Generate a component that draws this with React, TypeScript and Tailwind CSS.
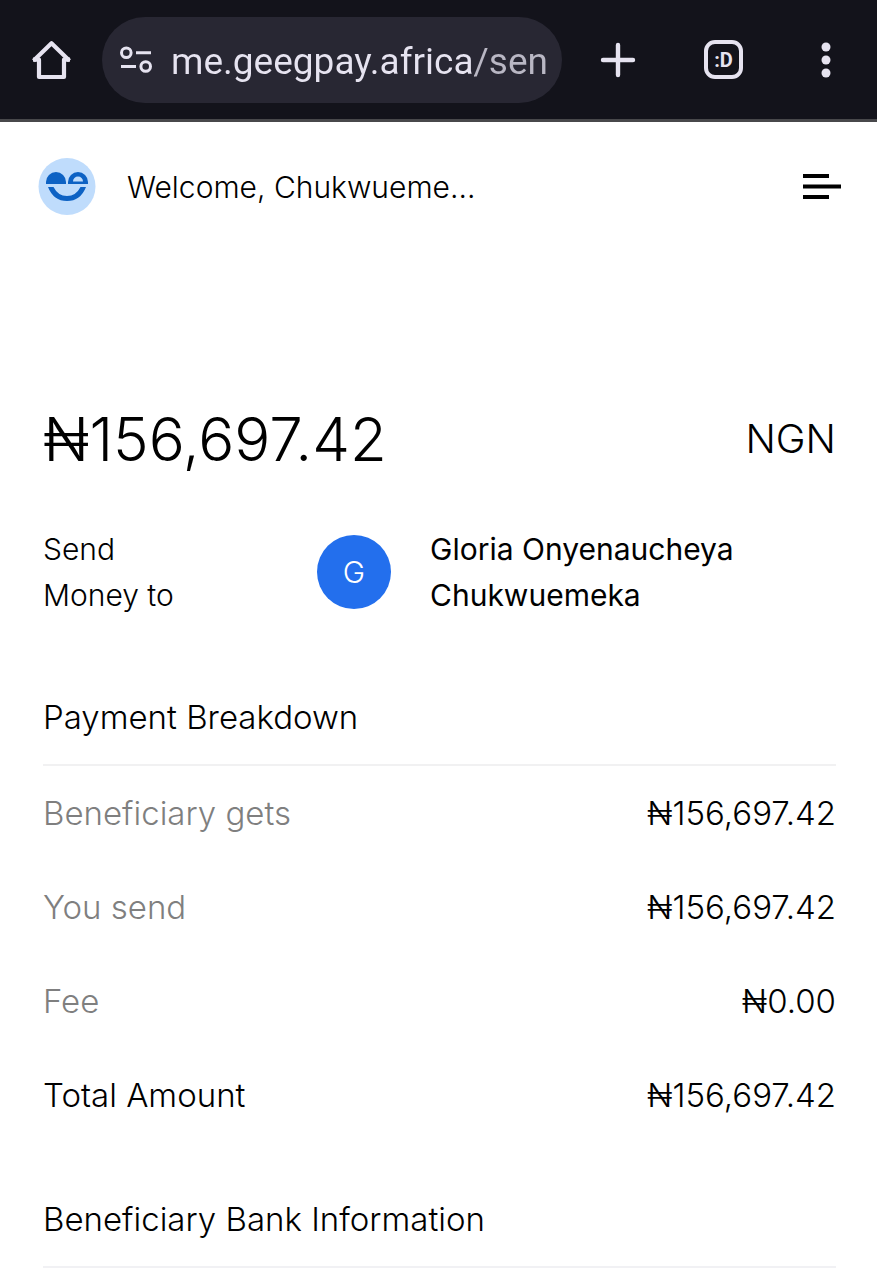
import { useState } from "react"

interface BreakdownRow {
  label: string
  amount: string
  total?: boolean
}

const breakdown: BreakdownRow[] = [
  { label: "Beneficiary gets", amount: "₦156,697.42" },
  { label: "You send", amount: "₦156,697.42" },
  { label: "Fee", amount: "₦0.00" },
  { label: "Total Amount", amount: "₦156,697.42", total: true },
]

function HomeIcon() {
  return (
    <svg className="h-10 w-10" viewBox="0 0 40 40" fill="none" stroke="currentColor" strokeWidth="4.2" strokeLinejoin="round">
      <path d="M1.5 20.8 19.5 3.2l18 17.6" />
      <path d="M1 19.7h6V37h25V19.7h6" />
    </svg>
  )
}

function SiteSettingsIcon() {
  return (
    <svg className="h-8 w-8 shrink-0" viewBox="0 0 32 32" fill="none" stroke="currentColor" strokeWidth="3">
      <circle cx="6.3" cy="8.8" r="4.8" />
      <path d="M16 8.8h15M1 22.5h15" />
      <circle cx="25.7" cy="22.5" r="4.8" />
    </svg>
  )
}

function AvatarIcon() {
  return (
    <svg className="h-[58px] w-[58px] shrink-0" viewBox="0 0 58 58" role="img" aria-label="Profile">
      <circle cx="29" cy="28.5" r="28.5" fill="#bfdcfc" />
      <g fill="#0d62c4">
        <path d="M8 26v-2a10 10 0 0 1 20 0v2z" />
        <path d="M30 26v-2a10 10 0 0 1 20 0v2z" />
        <path d="M10 29h5.5q4.5 9 13.5 9t13.5-9H48q-5.5 14-19 14T10 29z" />
      </g>
      <path d="M35 23.5a5 5 0 0 1 10 0z" fill="#bfdcfc" />
    </svg>
  )
}

function BrowserBar() {
  const [url, setUrl] = useState("me.geegpay.africa/send")

  return (
    <div className="flex h-[122px] items-center border-b-3 border-[#48484b] bg-[#13131b] pr-[31px] pl-8 text-[#e6e3f0]">
      <button aria-label="Home" className="shrink-0">
        <HomeIcon />
      </button>
      <div className="ml-[30px] flex h-[86px] min-w-0 flex-1 items-center gap-[19px] rounded-full bg-[#282733] pr-4 pl-[18px]">
        <SiteSettingsIcon />
        <input
          type="text"
          aria-label="Address"
          value={url}
          onChange={(e) => setUrl(e.target.value)}
          className="min-w-0 flex-1 bg-linear-to-r from-[#e6e3f0] from-81% to-[#b9b7c4] to-81% bg-clip-text pt-1 font-[Roboto,sans-serif] text-[37px] leading-[56px] font-normal text-transparent outline-none"
        />
      </div>
      <button aria-label="New tab" className="ml-9 shrink-0">
        <svg className="h-10 w-10" viewBox="0 0 40 40" stroke="currentColor" strokeWidth="4.4" strokeLinecap="round">
          <path d="M20 5v30M5 20h30" />
        </svg>
      </button>
      <button
        aria-label="Switch tabs"
        className="ml-[66px] flex h-[39px] w-[39px] shrink-0 items-center justify-center rounded-[11px] border-4 border-current font-[Roboto,sans-serif] text-xl font-bold"
      >
        :D
      </button>
      <button aria-label="More options" className="ml-[63px] shrink-0">
        <svg className="h-10 w-10" viewBox="0 0 40 40" fill="currentColor">
          <circle cx="20" cy="7" r="4.5" />
          <circle cx="20" cy="20" r="4.5" />
          <circle cx="20" cy="33" r="4.5" />
        </svg>
      </button>
    </div>
  )
}

export default function App() {
  return (
    <div className="min-h-screen bg-white font-[Inter,sans-serif] font-light text-black">
      <BrowserBar />

      <header className="flex items-center pt-9 pr-9 pl-[38px]">
        <AvatarIcon />
        <p className="ml-[31px] text-[30px] leading-[40px]">Welcome, Chukwueme...</p>
        <button aria-label="Open menu" className="ml-auto">
          <svg className="h-[26px] w-[38px]" viewBox="0 0 38 26" stroke="currentColor" strokeWidth="4">
            <path d="M0 2h26M0 12.5h38M0 23h26" />
          </svg>
        </button>
      </header>

      <main className="pt-[183px] pr-[41px] pl-[43px]">
        <div className="flex items-center justify-between">
          <h1 className="text-[60px] leading-[80px]">₦156,697.42</h1>
          <span className="text-[40px] leading-[56px]">NGN</span>
        </div>

        {/* Recipient */}
        <div className="mt-[47px] flex items-center text-[30px] leading-[46px]">
          <p className="w-[274px]">
            Send
            <br />
            Money to
          </p>
          <div className="flex h-[74px] w-[74px] shrink-0 items-center justify-center rounded-full bg-[#236fed] text-[30px] text-white">
            G
          </div>
          <p className="ml-[39px] flex-1 font-normal">
            Gloria Onyenaucheya
            <br />
            Chukwuemeka
          </p>
        </div>

        {/* Payment Breakdown */}
        <section className="mt-[76px]">
          <h2 className="border-b-2 border-[#f1f1f2] pb-6 text-[33px] leading-[46px]">
            Payment Breakdown
          </h2>
          <table className="w-full text-[33px] leading-[46px]">
            <tbody>
              {breakdown.map((row) => (
                <tr key={row.label}>
                  <th
                    scope="row"
                    className={row.total ? "py-6 text-left font-light" : "py-6 text-left font-light text-[#7f7f7f]"}
                  >
                    {row.label}
                  </th>
                  <td className="py-6 text-right">{row.amount}</td>
                </tr>
              ))}
            </tbody>
          </table>
        </section>

        <section className="mt-[54px]">
          <h2 className="border-b-2 border-[#f1f1f4] pb-6 text-[33px] leading-[46px]">
            Beneficiary Bank Information
          </h2>
        </section>
      </main>
    </div>
  )
}
